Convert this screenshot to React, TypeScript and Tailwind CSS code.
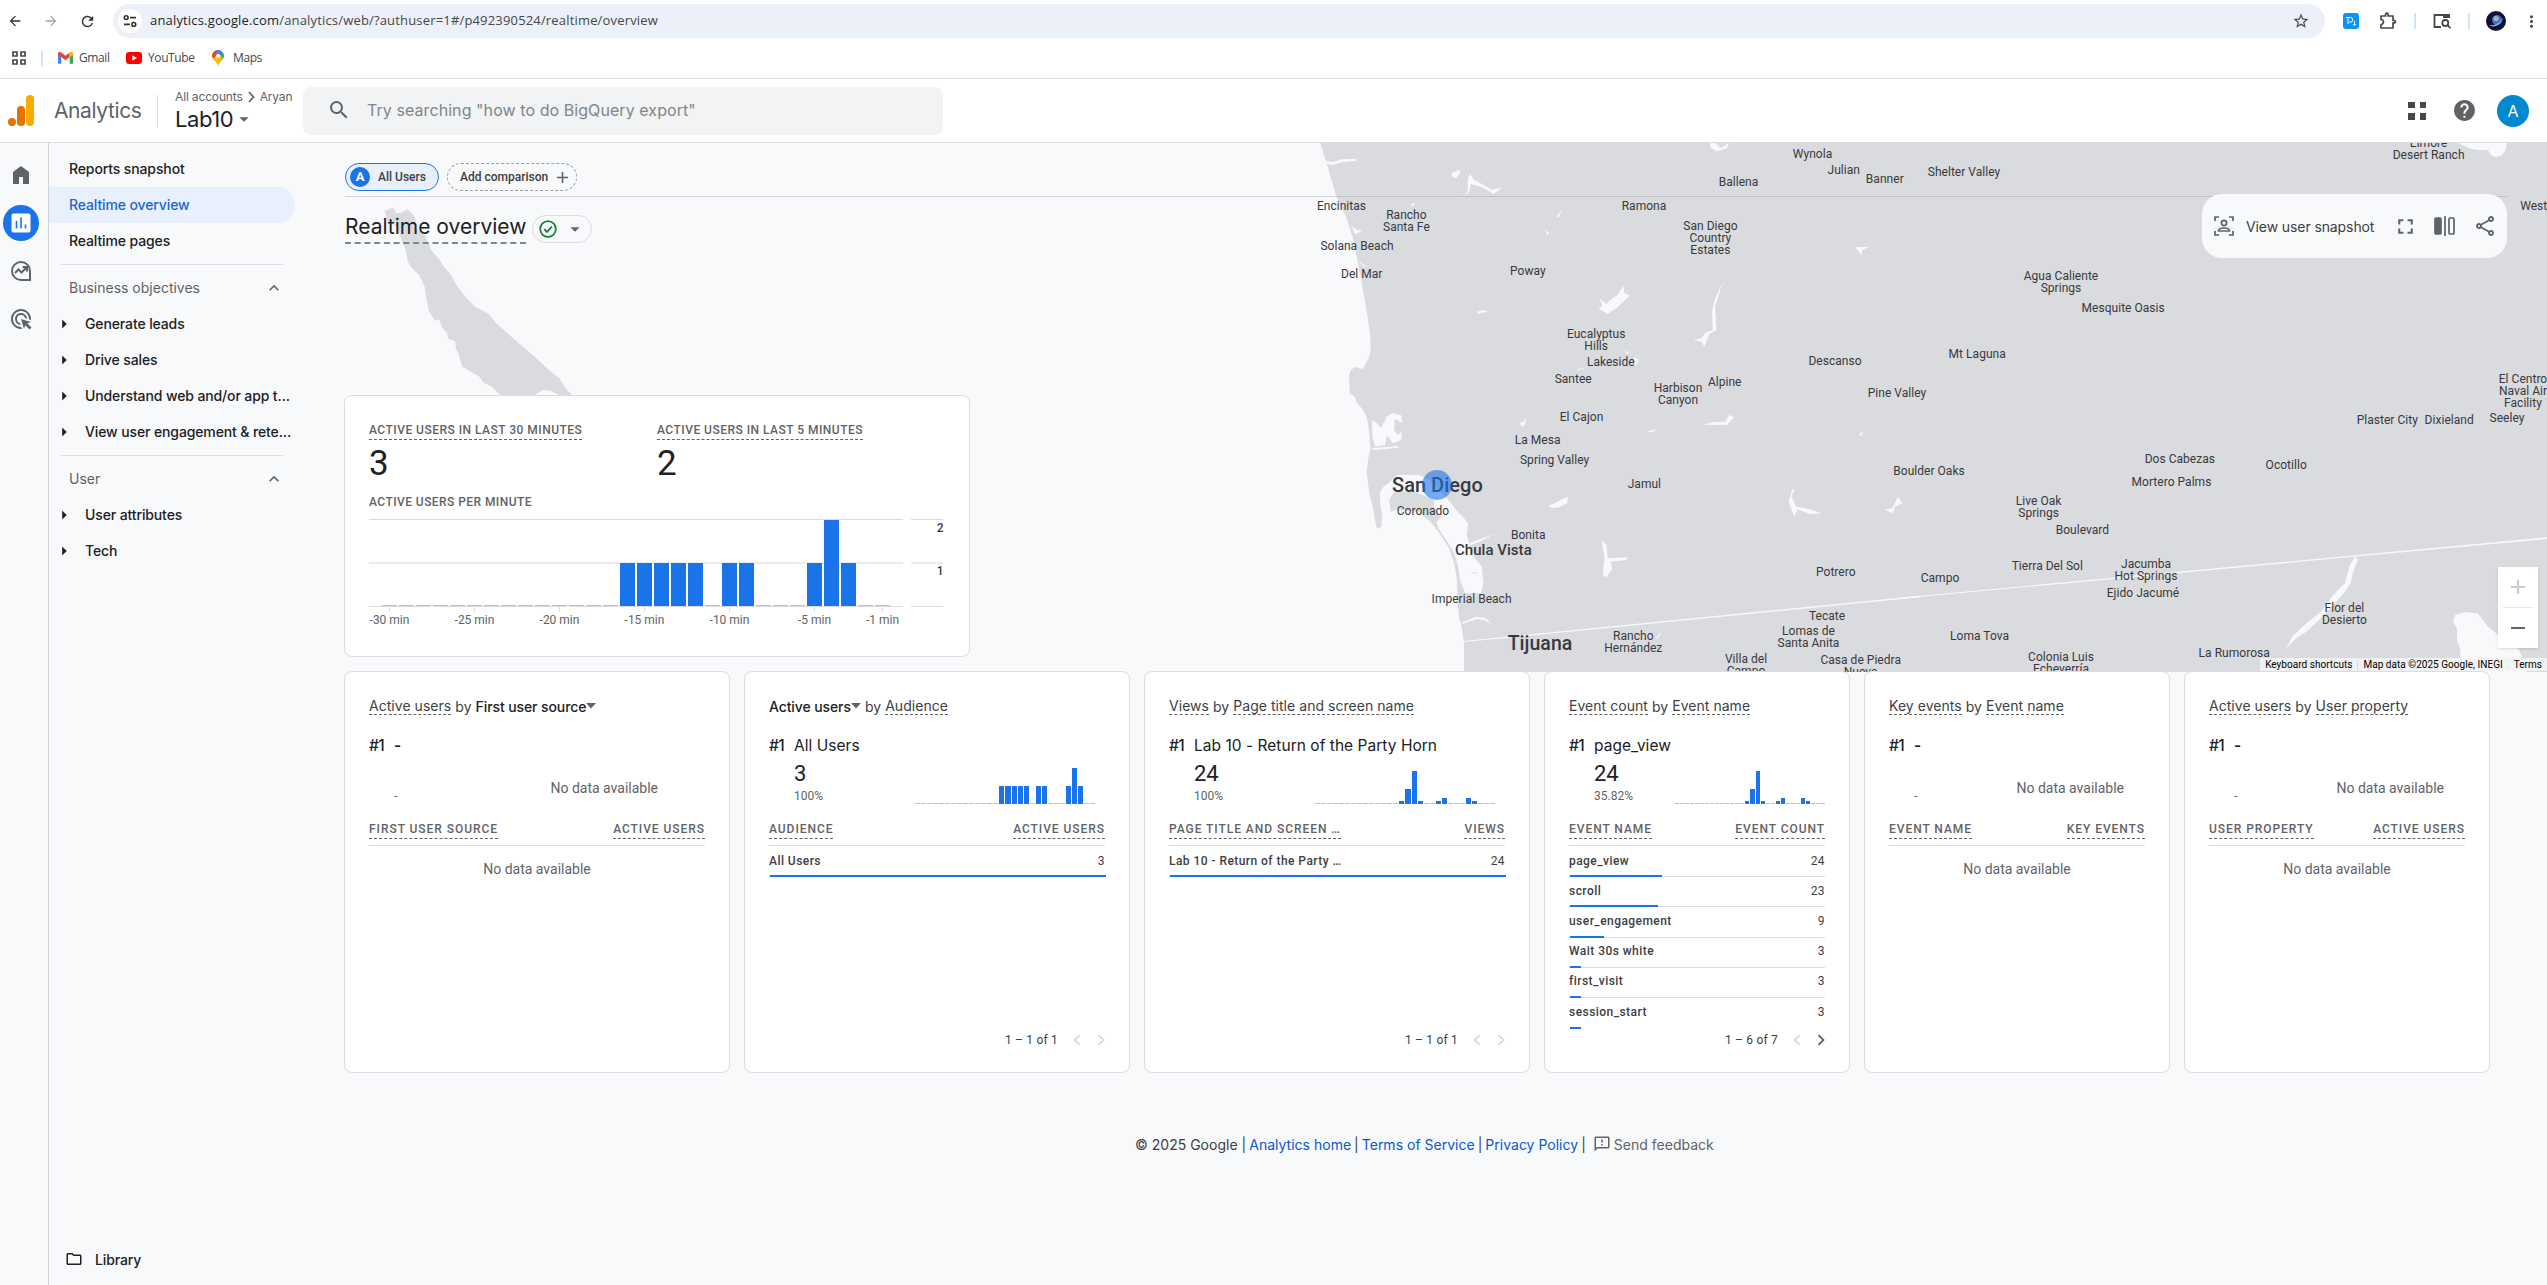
import React from "react";
import {
  MdAdd, MdAdsClick, MdArrowBack, MdArrowDropDown, MdArrowForward, MdArrowRight, MdChevronLeft, MdChevronRight,
  MdExpandLess, MdFullscreen, MdHelp, MdMoreVert, MdOutlineFeedback, MdOutlineFolder,
  MdOutlineShare, MdRefresh, MdRemove, MdSearch, MdStarBorder,
} from "react-icons/md";

const GS = "font-['Inter',sans-serif]";
const RB = "font-['Roboto',sans-serif]";
const UI = "font-['Open_Sans',sans-serif]";

function BrowserChrome() {
  return (
    <div className={`${UI} flex h-[79px] flex-col border-b border-[#dcdde0] bg-white text-[#474747]`}>
      <div className="flex h-[42px] items-center">
        <div className="flex w-[113px] items-center gap-5 pl-[7px]">
          <MdArrowBack size={16} className="text-[#333]" />
          <MdArrowForward size={16} className="text-[#a5a5a5]" />
          <MdRefresh size={17} className="text-[#333]" />
        </div>
        <div className="flex h-[34px] w-[2212px] items-center rounded-full bg-[#ecf0f9] pl-[5px] pr-[15px]">
          <div className="flex size-6 items-center justify-center rounded-full bg-white">
            <svg width="14" height="14" viewBox="0 0 14 14" fill="none" stroke="#333" strokeWidth="1.6">
              <circle cx="3.2" cy="3.6" r="1.9" /><path d="M7 3.6h6M1 10.4h6" /><circle cx="10.8" cy="10.4" r="1.9" />
            </svg>
          </div>
          <span className="ml-2 text-[13px] tracking-[0.17px] text-[#474747]">
            <span className="text-[#1f1f1f]">analytics.google.com</span>/analytics/web/?authuser=1#/p492390524/realtime/overview
          </span>
          <MdStarBorder size={18} className="ml-auto text-[#474747]" />
        </div>
        <div className="ml-[18px] flex size-4 items-center justify-center rounded-[3px] bg-[#0b93f6]">
          <svg width="12" height="12" viewBox="0 0 12 12" fill="none" stroke="#fff" strokeWidth="1">
            <path d="M1 2.5h4.5a2.2 2.2 0 0 1 0 4.6H4M3 2.5V9M9.5 6v4.5M8 9l1.5 1.5L11 9" />
          </svg>
        </div>
        <svg className="ml-5" width="18" height="18" viewBox="0 0 18 18" fill="none" stroke="#474747" strokeWidth="1.700" strokeLinejoin="round">
          <path d="M2 4h4.500V2.500a1.300 1.300 0 0 1 2.600 0V4H14v4.500h1.300a1.200 1.200 0 0 1 0 2.400H14V16H2v-3.500a2.500 2.500 0 0 0 0-5z" />
        </svg>
        <div className="ml-[17px] h-4 w-[2px] bg-[#d3e3fd]" />
        <svg className="ml-[17px]" width="18" height="16" viewBox="0 0 18 16" fill="none" stroke="#474747" strokeWidth="1.800">
          <path d="M8 14H1.500V2H16v3" /><path d="M10 1.500h7v3.500h-7z" fill="#474747" stroke="none" /><circle cx="12.300" cy="10" r="3" /><path d="M14.500 12.200l3 3" />
        </svg>
        <div className="ml-[17px] h-4 w-[2px] bg-[#d3e3fd]" />
        <svg className="ml-4" width="20" height="20" viewBox="0 0 20 20">
          <circle cx="10" cy="10" r="10" fill="#0c1138" /><circle cx="11" cy="9" r="5" fill="#3e74b8" /><circle cx="10" cy="7.500" r="2.600" fill="#a8b4bd" />
          <path d="M3 14c5 1 11-2 14-7-1 6-9 11-14 7z" fill="#7fa9ee" />
        </svg>
        <MdMoreVert size={19} className="ml-[16px]" />
      </div>
      <div className="flex h-[32px] items-center text-[12px]">
        <svg className="ml-3" width="14" height="14" viewBox="0 0 14 14" fill="none" stroke="#474747" strokeWidth="1.700">
          <path d="M1 1h4v4H1zM9 1h4v4H9zM1 9h4v4H1zM9 9h4v4H9z" />
        </svg>
        <div className="ml-[15px] h-4 w-[2px] bg-[#d3e3fd]" />
        <svg className="ml-[15px]" width="15" height="12" viewBox="0 0 15 12">
          <path d="M0 1.500V11a.8.8 0 0 0 .8.8h2.500V5z" fill="#4285f4" /><path d="M15 1.500V11a.8.8 0 0 1-.8.8h-2.500V5z" fill="#34a853" />
          <path d="M0 1.800C0 0 2 -.5 3.300.6L7.500 3.800 11.700.6 11.700 5 7.500 8.300 3.300 5 0 3z" fill="#ea4335" /><path d="M11.700.6C13 -.5 15 0 15 1.800V3l-3.300 2.500z" fill="#fbbc04" />
        </svg>
        <span className="ml-[6px] w-[31px] tracking-[-0.4px]">Gmail</span>
        <svg className="ml-[16px]" width="16" height="12" viewBox="0 0 16 12"><rect width="16" height="12" rx="3" fill="#f00" /><path d="M6.300 3.300L11 6 6.300 8.700z" fill="#fff" /></svg>
        <span className="ml-[6px] w-[47px] tracking-[-0.4px]">YouTube</span>
        <svg className="ml-[17px]" width="12" height="16" viewBox="0 0 12 16">
          <path d="M6 0a6 6 0 0 1 6 6c0 4-5 5-6 10z" fill="#34a853" /><path d="M6 0a6 6 0 0 0-6 6c0 4 5 5 6 10 1-4 3-5 4.500-7z" fill="#fbbc04" />
          <path d="M6 0a6 6 0 0 0-6 6l1 2.500L9.500 1z" fill="#ea4335" /><path d="M4 .4A6 6 0 0 1 11.500 4L6 6z" fill="#4285f4" /><circle cx="6" cy="6" r="2.100" fill="#fff" />
        </svg>
        <span className="ml-[9px] tracking-[-0.4px]">Maps</span>
      </div>
    </div>
  );
}

function AppHeader() {
  return (
    <header className={`${GS} flex h-[64px] items-center border-b border-[#dadce0] bg-white`}>
      <svg className="ml-2" width="26" height="31" viewBox="0 0 26 31">
        <rect x="18" y="0" width="8" height="31" rx="4" fill="#f9ab00" /><rect x="9" y="11" width="8" height="20" rx="3.800" fill="#e37400" /><circle cx="4" cy="27" r="4" fill="#e37400" />
      </svg>
      <span className="ml-5 w-[103px] text-[21px] tracking-[-0.4px] text-[#5f6368]">Analytics</span>
      <div className="h-8 w-px bg-[#dadce0]" />
      <div className="ml-[17px] flex w-[128px] flex-col">
        <div className="flex h-[17px] items-center text-[12px] tracking-[-0.150px] text-[#5f6368]">
          <span>All accounts</span>
          <svg className="mx-[5px]" width="7" height="12" viewBox="0 0 7 12" fill="none" stroke="#5f6368" strokeWidth="1.800"><path d="M1 1l4.500 5L1 11" /></svg>
          <span>Aryan</span>
        </div>
        <div className="flex h-[28px] items-center text-[22px] tracking-[-0.4px] text-[#202124]">
          Lab10<MdArrowDropDown size={22} className="text-[#5f6368]" />
        </div>
      </div>
      <div className="flex h-12 w-[640px] items-center rounded-lg bg-[#f1f3f4] pb-[2px] pl-6 text-[16px] tracking-[0.070px] text-[#80868b]">
        <MdSearch size={24} className="mr-4 text-[#5f6368]" />
        Try searching "how to do BigQuery export"
      </div>
      <div className="ml-auto flex items-center pr-[18px]">
        <div className="grid grid-cols-2 gap-[5px]">
          {[0, 1, 2, 3].map((i) => <div key={i} className="size-[6.5px] bg-[#474747]" />)}
        </div>
        <MdHelp size={25} className="ml-[26px] text-[#5f6368]" />
        <div className="ml-5 flex size-8 items-center justify-center rounded-full bg-[#0288d1] text-[16px] text-white">A</div>
      </div>
    </header>
  );
}

function Rail() {
  return (
    <nav className="flex w-[49px] flex-col items-center border-r border-[#cfd1d6] pr-[6px] pt-[14px] text-[#5f6368]">
      <div className="flex h-[36px] items-center"><svg width="24" height="24" viewBox="0 0 24 24" fill="currentColor"><path d="M4 21V9l8-6 8 6v12h-6v-7h-4v7z" /></svg></div>
      <div className="mt-3 flex size-9 items-center justify-center rounded-full bg-[#1a73e8]">
        <svg width="20" height="20" viewBox="0 0 20 20"><rect x="0.500" y="0.500" width="19" height="19" rx="2" fill="#fff" /><path d="M5.500 8v7.500M10 4.500v11M14.500 11.500v4" stroke="#1a73e8" strokeWidth="1.600" /></svg>
      </div>
      <div className="mt-3 flex h-[36px] items-center">
        <svg width="24" height="24" viewBox="0 0 24 24" fill="none" stroke="currentColor" strokeWidth="2">
          <path d="M12 21a9 9 0 1 1 9-9v9z" /><path d="M6 14l3.500-3.500 3 3L17.500 8.500M13.500 8H18v4.500" />
        </svg>
      </div>
      <div className="mt-3 flex h-[36px] items-center"><MdAdsClick size={24} /></div>
    </nav>
  );
}

function Item({ children }: { children: string }) {
  return (
    <div className="flex h-9 items-center">
      <MdArrowRight size={22} className="ml-[4px] mr-[10px] text-[#202124]" />
      <span className="pb-[2px]">{children}</span>
    </div>
  );
}

function Section({ children }: { children: string }) {
  return (
    <div className="flex h-[36px] items-center justify-between pl-5 pr-[11px] text-[#5f6368]">
      <span className="pb-[2px] font-normal tracking-normal">{children}</span>
      <MdExpandLess size={20} />
    </div>
  );
}

function Sidebar() {
  return (
    <aside className={`${GS} flex w-[256px] shrink-0 flex-col pt-[8px] text-[14px] font-[450] tracking-[-0.120px] text-[#202124]`}>
      <div className="flex h-9 items-center pb-[2px] pl-5">Reports snapshot</div>
      <div className="flex h-9 w-[246px] items-center rounded-r-full bg-[#e8f0fe] pb-[2px] pl-5 text-[#1967d2]">Realtime overview</div>
      <div className="flex h-9 items-center pb-[2px] pl-5">Realtime pages</div>
      <div className="ml-3 mt-[5px] h-px w-[222px] bg-[#dadce0]" />
      <div className="mt-[5px] w-[246px]"><Section>Business objectives</Section></div>
      <Item>Generate leads</Item>
      <Item>Drive sales</Item>
      <Item>Understand web and/or app t...</Item>
      <Item>View user engagement &amp; rete...</Item>
      <div className="ml-3 mt-[5px] h-px w-[222px] bg-[#dadce0]" />
      <div className="mt-[5px] w-[246px]"><Section>User</Section></div>
      <Item>User attributes</Item>
      <Item>Tech</Item>
      <div className="mt-auto mb-[8px] flex h-9 items-center gap-3 pl-4"><MdOutlineFolder size={18} />Library</div>
    </aside>
  );
}

type Place = [string, number, number];
const places: Place[] = [
  ["Wynola", 1812.5, 154], ["Julian", 1843.7, 170.3], ["Banner", 1884.8, 179.3], ["Ballena", 1738.5, 182.3], ["Encinitas", 1341.5, 206.3],
  ["Ramona", 1644, 206.3], ["Rancho\nSanta Fe", 1406.4, 215.3], ["San Diego\nCountry\nEstates", 1710.4, 226.3], ["Solana Beach", 1357, 246.3],
  ["Poway", 1527.8, 271.3], ["Del Mar", 1361.7, 274.3], ["Eucalyptus\nHills", 1596.2, 334.3], ["Lakeside", 1610.8, 362.3], ["Santee", 1573.2, 379.3],
  ["Harbison\nCanyon", 1678, 388.3], ["Alpine", 1724.7, 382.3], ["Descanso", 1835, 361.3], ["Pine Valley", 1897, 393.3], ["El Cajon", 1581.5, 417.3],
  ["La Mesa", 1537.6, 440.3], ["Spring Valley", 1554.6, 460.3], ["Jamul", 1644.4, 484.3], ["Boulder Oaks", 1929, 471.3], ["Coronado", 1423, 511.3],
  ["Bonita", 1528.2, 535.3], ["Imperial Beach", 1471.6, 599.3], ["Potrero", 1835.8, 572.3], ["Tecate", 1827, 616.3], ["Lomas de\nSanta Anita", 1808.5, 631.3],
  ["Villa del\nCampo", 1746, 659.3], ["Casa de Piedra\nNueva", 1860.7, 660.3], ["Rancho\nHernández", 1633.3, 636.3], ["Elmore\nDesert Ranch", 2428.6, 143.3],
  ["Shelter Valley", 1964, 172.3], ["Westmorland", 2556, 206.3], ["Agua Caliente\nSprings", 2061, 276.3], ["Mesquite Oasis", 2123.2, 308.3],
  ["Mt Laguna", 1977.2, 354.3], ["El Centro\nNaval Air\nFacility", 2523, 379.3], ["Seeley", 2507, 418.3], ["Plaster City", 2387.3, 420.3],
  ["Dixieland", 2449.2, 420.3], ["Dos Cabezas", 2179.8, 459.3], ["Ocotillo", 2286.2, 465.3], ["Mortero Palms", 2171.5, 482.3], ["Live Oak\nSprings", 2038.6, 501.3],
  ["Boulevard", 2082.4, 530.3], ["Tierra Del Sol", 2047.3, 566.3], ["Jacumba\nHot Springs", 2146, 564.3], ["Ejido Jacumé", 2143, 593.3], ["Campo", 1940, 578.3],
  ["Loma Tova", 1979.6, 636.3], ["Colonia Luis\nEcheverría", 2061, 657.3], ["La Rumorosa", 2234.2, 653.3], ["Flor del\nDesierto", 2344.4, 608.3],
];

const ORIGIN_X = 305;
const ORIGIN_Y = 143;

function RealtimeMap() {
  return (
    <div className={`${RB} absolute inset-x-0 top-0 h-[529px] overflow-hidden text-[12px] leading-3 tracking-[0.030px] text-[#37393c]`}>
      <svg className="absolute inset-0" width="2242" height="529" viewBox="305 143 2242 529">
        <g transform="translate(330 140) scale(0.42092 0.33333)" fill="#dadbdf">
          <path d="M130 212L150 203 158 220 170 218 183 208 195 220 203 235 203 265 225 285 235 310 240 330 262 362 270 380 288 405 300 435 325 475 345 500 375 520 395 550 440 600 490 655 520 690 545 715 560 745 575 766 545 766 525 752 505 750 485 766 405 766 385 740 365 728 355 710 335 695 314 680 305 640 299 625 298 605 280 595 278 580 265 560 260 540 248 541 235 512 228 470 225 440 212 405 195 385 185 365 180 330 170 300 160 260 135 240z" />
        </g>
        <g transform="translate(1300 130) scale(0.39541 0.33333)">
          <path fill="#dadbdf" d="M50 36L70 110 92 200 118 265 135 330 145 390 155 450 165 520 172 570 177 610 179 655 175 680 165 705 157 718 143 711 130 718 124 735 126 790 138 800 145 820 158 838 168 860 172 880 175 910 178 955 172 990 169 1025 172 1060 176 1095 184 1130 188 1160 193 1190 197 1196 205 1192 208 1160 203 1120 202 1090 210 1072 230 1053 245 1035 300 1034 330 1050 375 1110 395 1140 412 1160 425 1180 422 1215 430 1250 440 1280 460 1310 464 1360 458 1390 418 1390 405 1350 400 1310 390 1270 375 1240 350 1195 345 1175 357 1162 338 1130 340 1110 290 1085 240 1084 225 1110 230 1145 245 1140 300 1145 330 1175 350 1205 375 1250 390 1300 397 1350 398 1410 402 1460 410 1500 415 1540 415 1640 3200 1640 3200 36z" />
          <g fill="#f8f9fb">
            <path d="M66 92L85 96 105 88 143 86 143 92 105 97 82 106 68 102zM383 130L400 120 406 125 395 145 385 140zM430 130L440 150 465 165 485 180 512 172 490 192 460 172 432 162 428 185 408 208 424 185 424 150zM1035 38L1050 40 1065 55 1085 38 1080 55 1055 64 1040 55zM130 288L145 300 158 302 140 313zM663 235L655 260 648 262zM280 222L292 220 285 230zM620 300L630 308 626 315zM757 505L775 522 785 510 803 495 818 466 820 490 834 497 822 510 800 535 778 552 755 535 765 528zM447 545L465 540 473 545 450 551zM1080 452L1066 465 1058 500 1050 525 1052 575 1053 600 1035 612 1026 640 1022 650 1016 635 995 630 1015 625 1025 608 1044 600 1042 545 1048 510 1064 468zM1405 352L1440 350 1422 360 1420 376zM145 390L170 412 160 408zM822 662L834 668 826 672zM845 680L858 690 848 708zM700 718L728 712 705 720zM215 862L235 850 255 858 250 868 220 870z" />
            <path d="M182 870L195 880 205 895 218 865 232 850 256 856 258 880 240 865 238 900 248 915 258 905 256 930 235 940 220 915 215 945 190 950 183 920zM178 955L250 948 248 953 190 960zM555 880L565 875 572 863 570 880 562 892zM1020 885L1045 876 1075 875 1085 855 1098 862 1080 884 1040 885zM880 903L908 898 885 908zM1415 910L1425 905 1418 920zM628 1128L650 1116 668 1105 678 1100 676 1120 655 1132 640 1135zM1245 1076L1250 1080 1243 1100 1255 1130 1280 1135 1318 1150 1290 1152 1258 1138 1250 1160 1236 1115zM1512 1100L1524 1120 1505 1130 1500 1150 1478 1140 1498 1135zM762 1230L775 1245 778 1285 830 1282 825 1290 785 1295 790 1315 775 1342 766 1335 770 1280zM428 1240L490 1212 455 1235 430 1246z" />
            <path d="M415 1533L1568 1397V1402L415 1536zM408 1478L445 1460 470 1465 487 1484 465 1470 448 1467 410 1482zM900 1525L920 1495 905 1525z" />
          </g>
          <path d="M432 1325l16 3-4 4z" fill="#dadbdf" />
        </g>
        <g transform="translate(1900 130) scale(0.41263 0.33333)" fill="#f8f9fb">
          <path d="M1348 37H1471L1468 60 1458 76 1445 82 1432 76 1425 60 1400 60 1385 57 1368 48zM0 1403L1568 1222V1227L0 1406zM1103 1280L1110 1290 1098 1325 1092 1360 1075 1390 1050 1425 1015 1470 985 1505 960 1525 935 1557 950 1520 985 1480 1020 1445 1050 1395 1078 1360 1090 1305z" />
          <path d="M1340 1475L1345 1455 1370 1446 1400 1450 1425 1490 1450 1515 1500 1560 1515 1600 1520 1640 1355 1640 1358 1560 1350 1530 1350 1495z" />
        </g>
      </svg>
      {places.map(([name, x, y]) => (
        <div key={name} className="absolute -translate-x-1/2 whitespace-pre text-center" style={{ left: x - ORIGIN_X, top: y - ORIGIN_Y - 6 }}>{name}</div>
      ))}
      <div className="absolute left-[1087px] top-[332px] w-[90px] whitespace-nowrap text-center text-[20px] font-medium leading-5">San Diego</div>
      <div className="absolute left-[1150px] top-[398px] w-[76px] whitespace-nowrap text-center text-[15px] font-medium leading-[18px]">Chula Vista</div>
      <div className="absolute left-[1202px] top-[491px] w-[66px] whitespace-nowrap text-center text-[19.500px] font-medium leading-5">Tijuana</div>
      <div className="absolute left-[1117px] top-[327px] size-[30px] rounded-full bg-[#1a73e8]/60" />
      <div className="absolute bottom-[1px] right-0 flex h-[13px] items-center whitespace-nowrap bg-[#f2f3f4]/90 text-[10px] text-black">
        <span className="px-[5px]">Keyboard shortcuts</span>
        <span className="border-l border-[#dadce0] px-[5px]">Map data ©2025 Google, INEGI</span>
        <span className="border-l border-[#eee] px-[5px]">Terms</span>
      </div>
      <div className="absolute right-[9px] top-[424px] flex h-[81px] w-[40px] flex-col items-center bg-white shadow">
        <div className="flex h-10 items-center"><MdAdd size={24} className="text-[#ccc]" /></div>
        <div className="h-px w-[30px] bg-[#e6e6e6]" />
        <div className="flex h-10 items-center"><MdRemove size={24} className="text-[#666]" /></div>
      </div>
    </div>
  );
}

const minutes = [0,0,0,0,0,0,0,0,0,0,0,0,0,0,1,1,1,1,1,0,1,1,0,0,0,1,2,1,0,0];
const viewBars = [0,0,0,0,0,0,0,0,0,0,0,0,0,0,3,15,33,3,0,0,3,6,0,0,0,6,3,0,0,0];
const userBars = minutes.map((v) => v * 18);

function PerMinuteChart() {
  return (
    <svg className="mt-[8px] block" width="576" height="110" viewBox="369 519 576 110">
      <g fill="#dadce0">
        <rect x="369" y="519" width="534" height="1" /><rect x="911" y="519" width="32" height="1" />
        <rect x="369" y="562" width="534" height="2" fill="#ececec" /><rect x="911" y="562" width="32" height="2" fill="#ececec" />
        <rect x="369" y="606" width="534" height="1" /><rect x="911" y="606" width="32" height="1" />
      </g>
      {minutes.map((v, i) => (
        <rect key={i} x={382 + i * 17} y={v === 2 ? 520 : v === 1 ? 563 : 605} width="15" height={v === 2 ? 86 : v === 1 ? 43 : 1} fill={v ? "#1a73e8" : "#bdc1c6"} />
      ))}
      <g className="font-['Roboto',sans-serif]" fontSize="12" fill="#5f6368" textAnchor="middle">
        {[30, 25, 20, 15, 10, 5, 1].map((m) => (
          <g key={m}><rect x={389 + (30 - m) * 17} y="607" width="1" height="5" fill="#dadce0" /><text className="font-normal" x={389.500 + (30 - m) * 17} y="624">{`-${m} min`}</text></g>
        ))}
        <text x="943.500" y="531.500" textAnchor="end" fill="#3c4043">2</text>
        <text x="943.500" y="574.500" textAnchor="end" fill="#3c4043">1</text>
      </g>
    </svg>
  );
}

function HeroCard() {
  const label = "inline-block h-[18px] border-b border-dashed border-[#5f6368] leading-[17px]";
  return (
    <section className={`${RB} relative mt-[152px] h-[262px] w-[626px] rounded-lg border border-[#dadce0] bg-white px-6 text-[12px] font-medium text-[#5f6368]`}>
      <div className="mt-[25px] flex tracking-[0.480px]">
        <div className="w-[288px]"><span className={label}>ACTIVE USERS IN LAST 30 MINUTES</span><div className="mt-[4px] text-[35px] font-normal leading-[40px] tracking-normal text-[#202124]">3</div></div>
        <div><span className={label}>ACTIVE USERS IN LAST 5 MINUTES</span><div className="mt-[4px] text-[35px] font-normal leading-[40px] tracking-normal text-[#202124]">2</div></div>
      </div>
      <div className="mt-[9px] h-[18px] leading-[18px] tracking-[0.440px]">ACTIVE USERS PER MINUTE</div>
      <PerMinuteChart />
    </section>
  );
}

type CardProps = {
  metric: string; dim: string; metricPick?: boolean; dimPick?: boolean;
  top?: string; value?: string; share?: string; bars?: number[]; narrow?: boolean;
  cols: [string, string]; rows?: [string, number, number][]; page?: string; more?: boolean;
};

function Term({ children, pick }: { children: string; pick?: boolean }) {
  return pick
    ? <span className="flex items-center font-[450] tracking-[-0.100px] text-[#202124]">{children}<svg width="10" height="6" viewBox="0 0 10 6"><path d="M0 0h10L5 5.500z" fill="#5f6368" /></svg></span>
    : <span className="mt-px h-[17px] border-b border-dashed border-[#5f6368] leading-4">{children}</span>;
}

function Card({ metric, dim, metricPick, dimPick, top, value, share, bars, narrow, cols, rows, page, more }: CardProps) {
  const th = "h-5 whitespace-nowrap border-b border-dashed border-[#5f6368] leading-5";
  return (
    <section className={`${RB} ${narrow ? "w-[306px]" : "w-[386px]"} flex h-[402px] flex-col rounded-lg border border-[#dadce0] bg-white px-6 text-[#5f6368]`}>
      <h3 className={`${GS} mt-[21px] flex h-[26px] items-center gap-1 whitespace-nowrap text-[14px] tracking-[0.040px] text-[#3c4043]`}>
        <Term pick={metricPick}>{metric}</Term>by<Term pick={dimPick}>{dim}</Term>
      </h3>
      <div className={`${GS} mt-[17px] flex h-5 items-center text-[15.500px] text-[#202124]`}>
        <span className="w-[25px] whitespace-nowrap font-medium tracking-[-0.600px]">#1</span><span className={top ? "font-normal tracking-[0.030px]" : "font-semibold"}>{top ?? "-"}</span>
      </div>
      <div className="flex h-[60px] justify-between pl-[25px]">
        <div className="pt-[6px]">
          <div className="h-6 text-[22px] leading-6 text-[#202124]">{value}</div>
          <div className="mt-[2px] text-[12px] leading-4">{share ?? "-"}</div>
        </div>
        {bars ? (
          <div className={`flex h-12 items-end gap-px ${narrow ? "w-[150px]" : "mr-[10px] w-[180px]"}`}>
            {bars.map((b, i) => (
              <div key={i} className={`flex-1 ${b ? "bg-[#1a73e8]" : "bg-[#bdc1c6]"}`} style={{ height: b || 1 }} />
            ))}
          </div>
        ) : (
          <div className={`${narrow ? "mr-[21px]" : "mr-[47px]"} mt-[22px] text-[14px] leading-5`}>No data available</div>
        )}
      </div>
      <div className="flex h-[30px] items-start justify-between border-b border-[#dadce0] pt-[3px] text-[12px] font-medium tracking-[0.950px]">
        <span className={th}>{cols[0]}</span><span className={th}>{cols[1]}</span>
      </div>
      {rows ? rows.map(([name, n, w], i) => (
        <div key={name} className={`relative flex h-[30.200px] shrink-0 items-center justify-between pb-[2px] text-[12px] text-[#3c4043] ${i === 0 ? "mt-px" : ""} ${i < 5 ? "border-b border-[#dadce0]" : ""}`}>
          <span className="font-medium tracking-[0.450px]">{name}</span><span className="tracking-[0.400px]">{n}</span>
          <div className="absolute -bottom-px left-px h-[2px] bg-[#1a73e8]" style={{ width: w }} />
        </div>
      )) : <div className="mt-[13px] text-center text-[14px] leading-5">No data available</div>}
      {page && (
        <div className="mb-[22px] mt-auto flex h-5 items-center justify-end text-[12px] tracking-[0.200px] text-[#3c4043]">
          <span className="mr-[8px]">{page}</span>
          <MdChevronLeft size={22} className="text-[#d5d7da]" /><MdChevronRight size={22} className={more ? "-mr-[7px] ml-[2px] text-[#5f6368]" : "-mr-[7px] ml-[2px] text-[#d5d7da]"} />
        </div>
      )}
    </section>
  );
}

function Toolbar() {
  return (
    <div className={`${GS} -mt-[3px] flex h-16 w-[305px] items-center rounded-[20px] bg-[#f8f9fb] pl-[11px] text-[14px] text-[#3c4043]`}>
      <svg width="22" height="22" viewBox="0 0 22 22" fill="none" stroke="#5f6368" strokeWidth="1.700">
        <path d="M2 6V2h4M16 2h4v4M20 16v4h-4M6 20H2v-4" /><circle cx="11" cy="8" r="2.600" /><path d="M5.500 16c0-4 11-4 11 0z" />
      </svg>
      <span className="ml-[11px] w-[140px] whitespace-nowrap tracking-[-0.100px]">View user snapshot</span>
      <MdFullscreen size={25} className="ml-[7px] text-[#5f6368]" />
      <svg className="ml-4" width="22" height="22" viewBox="0 0 22 22" fill="none" stroke="#5f6368" strokeWidth="1.700">
        <rect x="1" y="3" width="6" height="16" rx="1" fill="#5f6368" /><path d="M11 1v20" /><rect x="15" y="3" width="5" height="16" rx="1" />
      </svg>
      <MdOutlineShare size={24} className="ml-[17px] text-[#5f6368]" />
    </div>
  );
}

function Footer() {
  return (
    <footer className={`${GS} mt-[61px] flex h-5 items-center gap-[3px] pl-[791px] text-[14px] tracking-[0.010px] text-[#3c4043]`}>
      <span>© 2025 Google |</span><a className="text-[#0b57d0]">Analytics home</a>|<a className="text-[#0b57d0]">Terms of Service</a>|<a className="text-[#0b57d0]">Privacy Policy</a>|
      <MdOutlineFeedback size={18} className="ml-1 text-[#5f6368]" /><span className="text-[#5f6368]">Send feedback</span>
    </footer>
  );
}

export default function App() {
  return (
    <div className="flex h-[1285px] w-[2547px] flex-col overflow-hidden bg-[#f8f9fb]">
      <BrowserChrome />
      <AppHeader />
      <div className="flex flex-1">
        <Rail />
        <Sidebar />
        <main className="relative flex w-[2242px] flex-col pl-[39px]">
          <RealtimeMap />
          <div className={`${RB} relative ml-px mt-[20px] flex h-[34px] w-[2162px] items-start gap-2 border-b border-[#80868b]/30 text-[12px] font-medium text-[#3c4043]`}>
            <div className="flex h-7 w-[94px] items-center rounded-full border border-[#1a73e8] bg-[#e8f0fe] pl-1">
              <span className="mr-2 flex size-5 items-center justify-center rounded-full bg-[#1a73e8] text-[13px] font-bold text-white">A</span>All Users
            </div>
            <div className="flex h-7 w-[130px] items-center justify-between rounded-full border border-dashed border-[#9aa0a6] pl-3 pr-1">Add comparison<MdAdd size={19} className="text-[#5f6368]" /></div>
          </div>
          <div className="relative ml-px flex h-[46px] w-[2162px] items-start">
            <h1 className={`${GS} mt-[15px] h-[32px] border-b-2 border-dashed border-[#80868b] text-[21px] leading-[30px] text-[#202124]`}>Realtime overview</h1>
            <div className="ml-[6px] mt-[18px] flex h-7 w-[60px] items-center justify-between rounded-full border border-[#dadce0] pl-[6px] pr-[5px]">
              <svg width="18" height="18" viewBox="0 0 18 18" fill="none" stroke="#188038" strokeWidth="1.800"><circle cx="9" cy="9" r="7.800" /><path d="M5.200 9.200l2.700 2.700 5-5.200" /></svg>
              <MdArrowDropDown size={22} className="text-[#5f6368]" />
            </div>
            <div className="ml-auto"><Toolbar /></div>
          </div>
          <HeroCard />
          <div className="relative mt-[14px] flex gap-[14px]">
            <Card metric="Active users" dim="First user source" dimPick cols={["FIRST USER SOURCE", "ACTIVE USERS"]} />
            <Card metric="Active users" metricPick dim="Audience" top="All Users" value="3" share="100%" bars={userBars} cols={["AUDIENCE", "ACTIVE USERS"]} rows={[["All Users", 3, 336]]} page="1 – 1 of 1" />
            <Card metric="Views" dim="Page title and screen name" top="Lab 10 - Return of the Party Horn" value="24" share="100%" bars={viewBars} cols={["PAGE TITLE AND SCREEN …", "VIEWS"]} rows={[["Lab 10 - Return of the Party …", 24, 336]]} page="1 – 1 of 1" />
            <Card narrow metric="Event count" dim="Event name" top="page_view" value="24" share="35.82%" bars={viewBars} cols={["EVENT NAME", "EVENT COUNT"]}
              rows={[["page_view", 24, 92], ["scroll", 23, 88], ["user_engagement", 9, 34], ["Wait 30s white", 3, 11], ["first_visit", 3, 11], ["session_start", 3, 11]]} page="1 – 6 of 7" more />
            <Card narrow metric="Key events" dim="Event name" cols={["EVENT NAME", "KEY EVENTS"]} />
            <Card narrow metric="Active users" dim="User property" cols={["USER PROPERTY", "ACTIVE USERS"]} />
          </div>
          <Footer />
        </main>
      </div>
    </div>
  );
}
